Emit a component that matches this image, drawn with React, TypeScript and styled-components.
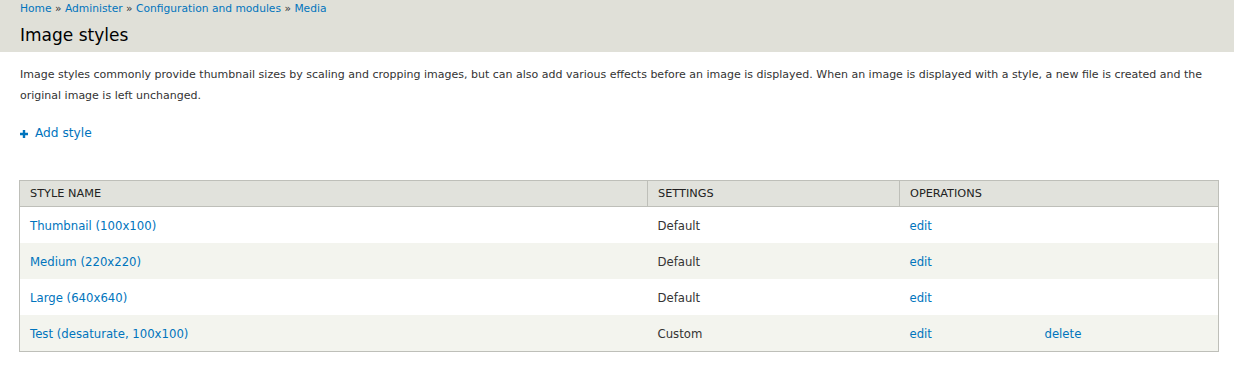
import React from 'react'
import styled, { createGlobalStyle } from 'styled-components'

const GlobalStyle = createGlobalStyle`
    html, body {
        margin:0;
        padding:0;
        background:#fff;
    }
    body{
        font-family:"DejaVu Sans", "Liberation Sans", sans-serif;
        font-size:12px;
        color:#333;
    }
`

const Header = styled.div`
    background:#e0e0d8;
    height:52px;
    padding:1px 20px 0;
    box-sizing:border-box;
`
const Breadcrumb = styled.div`
    font-size:10.7px;
    line-height:16px;
    > a{
        color:#0074bd;
        text-decoration:none;
    }
`
const Title = styled.h1`
    margin:6px 0 0;
    font-size:17px;
    line-height:24px;
    font-weight:normal;
    color:#000;
`
const Content = styled.div`
    padding:0 15px 0 19px;
`
const Intro = styled.p`
    margin:12px -6px 0 1px;
    font-size:11px;
    line-height:21px;
`
const ActionLink = styled.a`
    display:flex;
    align-items:center;
    gap:7px;
    margin:17px 0 0 1px;
    line-height:21px;
    font-size:12.2px;
    color:#0074bd;
    text-decoration:none;
`
const Table = styled.table`
    margin-top:36px;
    width:100%;
    border-collapse:collapse;
    table-layout:fixed;
    border:1px solid #bebfb9;
`
const Th = styled.th`
    background:#e1e2dc;
    border-bottom:1px solid #bebfb9;
    border-left:1px solid #bebfb9;
    height:25px;
    padding:0 10px;
    text-align:left;
    font-weight:normal;
    font-size:11.3px;
    text-transform:uppercase;
    color:#222;
    &:first-child{
        border-left:none;
    }
`
const Row = styled.tr<{ $even: boolean }>`
    background:${p => p.$even ? '#f3f4ee' : '#fff'};
`
const Td = styled.td`
    height:34px;
    padding:2px 10px 0;
    font-size:11.7px;
    > a{
        color:#0074bd;
        text-decoration:none;
    }
`

const PlusIcon = () => (
    <svg width="8" height="8" viewBox="0 0 8 8">
        <path d="M2.8 0h2.4v2.8H8v2.4H5.2V8H2.8V5.2H0V2.8h2.8z" fill="#0074bd" />
    </svg>
)

type Style = {
    name: string,
    settings: string,
    deletable?: boolean
}
const styles: Style[] = [
    { name: 'Thumbnail (100x100)', settings: 'Default' },
    { name: 'Medium (220x220)', settings: 'Default' },
    { name: 'Large (640x640)', settings: 'Default' },
    { name: 'Test (desaturate, 100x100)', settings: 'Custom', deletable: true },
]

const App: React.FC = () => {
    return (
        <>
            <GlobalStyle />
            <Header>
                <Breadcrumb>
                    <a href="#">Home</a> » <a href="#">Administer</a> » <a href="#">Configuration and modules</a> » <a href="#">Media</a>
                </Breadcrumb>
                <Title>Image styles</Title>
            </Header>
            <Content>
                <Intro>
                    Image styles commonly provide thumbnail sizes by scaling and cropping images, but can also add various effects before an image is displayed. When an image is displayed with a style, a new file is created and the original image is left unchanged.
                </Intro>
                <ActionLink href="#"><PlusIcon />Add style</ActionLink>
                <Table>
                    <colgroup>
                        <col style={{ width: 628 }} />
                        <col style={{ width: 252 }} />
                        <col style={{ width: 135 }} />
                        <col />
                    </colgroup>
                    <thead>
                        <tr>
                            <Th>Style name</Th>
                            <Th>Settings</Th>
                            <Th colSpan={2}>Operations</Th>
                        </tr>
                    </thead>
                    <tbody>
                        {styles.map((s, i) => (
                            <Row key={s.name} $even={i % 2 === 1}>
                                <Td><a href="#">{s.name}</a></Td>
                                <Td>{s.settings}</Td>
                                <Td><a href="#">edit</a></Td>
                                <Td>{s.deletable ? <a href="#">delete</a> : null}</Td>
                            </Row>
                        ))}
                    </tbody>
                </Table>
            </Content>
        </>
    )
}
export default App
